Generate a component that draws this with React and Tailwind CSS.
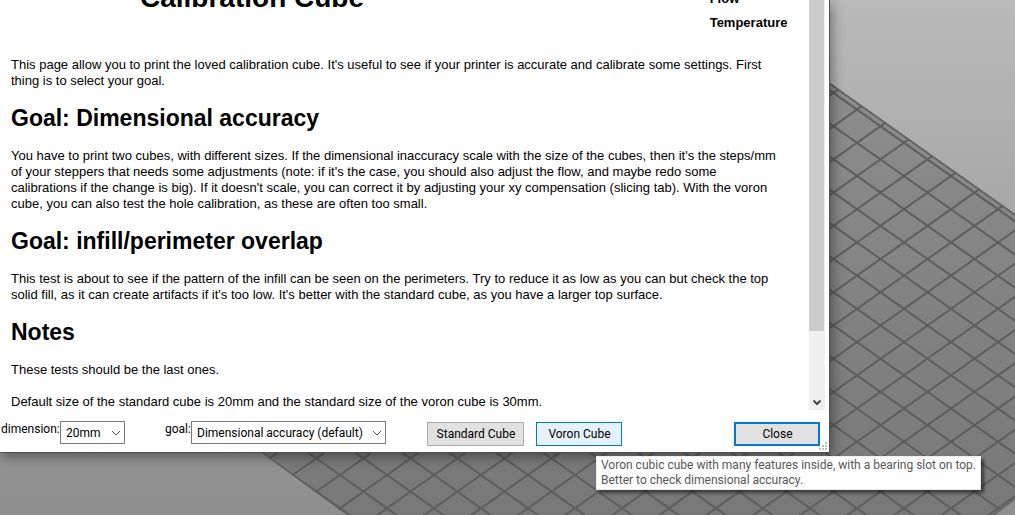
const STEPS = Array.from({ length: 72 }, (_, i) => i - 36);

function PrintBed() {
  return (
    <svg
      className="absolute inset-0 h-full w-full"
      viewBox="0 0 1015 515"
      preserveAspectRatio="xMinYMin slice"
      aria-hidden="true"
    >
      <defs>
        <linearGradient id="sky" x1="0" y1="0" x2="0" y2="1">
          <stop offset="0" stopColor="#bababa" />
          <stop offset="0.4" stopColor="#a8a8a8" />
          <stop offset="1" stopColor="#8e8e8e" />
        </linearGradient>
        <linearGradient id="bed" x1="0" y1="0" x2="0" y2="1">
          <stop offset="0" stopColor="#919191" />
          <stop offset="1" stopColor="#787878" />
        </linearGradient>
        <clipPath id="bedClip">
          <path d="M257 449L500 0L712 0L830 83L1015 214V498L992 515H346Z" />
        </clipPath>
        <clipPath id="gridClip">
          <path d="M250 444L500 0L700 -4L833 90L1015 218V498L992 515H346Z" />
        </clipPath>
      </defs>
      <rect width="1015" height="515" fill="url(#sky)" />
      <g clipPath="url(#bedClip)">
        <rect width="1015" height="515" fill="url(#bed)" />
      </g>
      <g clipPath="url(#bedClip)" stroke="#5e5e5e" strokeWidth="2">
        {STEPS.map((k) => (
          <path key={k} d={`M-14 ${691.9 + k * 33.22}L1020 ${-38.9 + k * 33.22}`} />
        ))}
      </g>
      <g clipPath="url(#gridClip)" stroke="#5e5e5e" strokeWidth="2">
        {STEPS.map((k) => (
          <path key={k} d={`M-13 ${225.5 + k * 33.22}L1021 ${956.3 + k * 33.22}`} />
        ))}
      </g>
      <path d="M826 81L1016 215.5M992 516L1016 498" stroke="#636363" strokeWidth="1.8" fill="none" />
    </svg>
  );
}

function Chevron() {
  return (
    <svg
      className="pointer-events-none absolute top-1/2 right-1 h-2 w-2.5 -translate-y-1/2"
      viewBox="0 0 10 8"
      fill="none"
      stroke="#555"
      aria-hidden="true"
    >
      <path d="M1 2L5 6L9 2" />
    </svg>
  );
}

function Combo({ id, label, options, labelWidth, width }) {
  return (
    <div className="flex items-start">
      <label htmlFor={id} className={`leading-4 whitespace-nowrap ${labelWidth}`}>{label}</label>
      <div className={`relative ${width}`}>
        <select
          id={id}
          className="block h-[23px] w-full appearance-none border border-[#7a7a7a] bg-white pr-4 pl-[5px] outline-none"
        >
          {options.map((o) => (
            <option key={o}>{o}</option>
          ))}
        </select>
        <Chevron />
      </div>
    </div>
  );
}

function Goal({ title, lines }) {
  return (
    <section>
      <h2 className="my-4 text-[23px] leading-[27px] font-bold">{title}</h2>
      <Lines lines={lines} />
    </section>
  );
}

function Lines({ lines }) {
  return (
    <p>
      {lines.map((line) => (
        <span key={line} className="block whitespace-nowrap">{line}</span>
      ))}
    </p>
  );
}

export default function App() {
  return (
    <main className="relative min-h-screen overflow-hidden bg-[#8e8e8e] font-['Liberation_Sans',sans-serif] text-black">
      <PrintBed />
      <div
        role="dialog"
        aria-label="Calibration Cube"
        className="relative w-9/11 border-r border-b border-[#505050] bg-white shadow-[2px_4px_12px_rgba(0,0,0,0.4)]"
      >
        <div className="flex pr-1">
          <article className="min-w-0 flex-1 pl-[11px] text-[13px] leading-4">
            <header className="flex h-[57px] items-start justify-between overflow-hidden pr-[22px] pl-[129px]">
              <h1 className="-mt-[18px] text-[28px] leading-8 font-bold">Calibration Cube</h1>
              <ul className="-mt-[9px] space-y-2 font-bold">
                <li>Flow</li>
                <li>Temperature</li>
              </ul>
            </header>
            <Lines
              lines={[
                "This page allow you to print the loved calibration cube. It's useful to see if your printer is accurate and calibrate some settings. First",
                'thing is to select your goal.',
              ]}
            />
            <Goal
              title="Goal: Dimensional accuracy"
              lines={[
                "You have to print two cubes, with different sizes. If the dimensional inaccuracy scale with the size of the cubes, then it's the steps/mm",
                "of your steppers that needs some adjustments (note: if it's the case, you should also adjust the flow, and maybe redo some",
                "calibrations if the change is big). If it doesn't scale, you can correct it by adjusting your xy compensation (slicing tab). With the voron",
                'cube, you can also test the hole calibration, as these are often too small.',
              ]}
            />
            <Goal
              title="Goal: infill/perimeter overlap"
              lines={[
                'This test is about to see if the pattern of the infill can be seen on the perimeters. Try to reduce it as low as you can but check the top',
                "solid fill, as it can create artifacts if it's too low. It's better with the standard cube, as you have a larger top surface.",
              ]}
            />
            <Goal title="Notes" lines={['These tests should be the last ones.']} />
            <p className="mt-4">
              Default size of the standard cube is 20mm and the standard size of the voron cube is 30mm.
            </p>
          </article>
          <div className="flex w-4 flex-col bg-[#f0f0f0]">
            <div className="h-[331px] w-[15px] bg-[#cdcdcd]" />
            <button type="button" aria-label="Scroll down" className="mt-auto flex h-4 w-full items-center justify-center">
              <svg className="h-2 w-2" viewBox="0 0 8 8" fill="none" stroke="#484848" strokeWidth="2" aria-hidden="true">
                <path d="M0.5 2.5L4 6L7.5 2.5" />
              </svg>
            </button>
          </div>
        </div>
        <footer className="relative flex h-[42px] items-start pt-[11px] pr-[9px] pl-px font-['Roboto',sans-serif] text-xs">
          <Combo
            id="dimension"
            label="dimension:"
            labelWidth="w-[59px]"
            width="w-[65px]"
            options={['20mm', '30mm', '40mm']}
          />
          <div className="w-10" />
          <Combo
            id="goal"
            label="goal:"
            labelWidth="w-[26px]"
            width="w-[195px]"
            options={['Dimensional accuracy (default)', 'infill/perimeter overlap']}
          />
          <div className="ml-auto flex pt-px">
            <button type="button" className="mr-3 h-6 w-[97px] border border-[#adadad] bg-[#e1e1e1]">
              Standard Cube
            </button>
            <button
              type="button"
              aria-describedby="voron-tip"
              className="mr-28 h-6 w-[86px] border border-[#0078d7] bg-[#e5f1fb]"
            >
              Voron Cube
            </button>
            <button type="button" className="h-6 w-[86px] border-2 border-[#0078d7] bg-[#e1e1e1]">
              Close
            </button>
          </div>
          <svg className="absolute right-0.5 bottom-0.5 h-2 w-2" viewBox="0 0 8 8" fill="#bfbfbf" aria-hidden="true">
            <path d="M6 0h2v2h-2zM6 3h2v2h-2zM6 6h2v2h-2zM3 3h2v2h-2zM3 6h2v2h-2zM0 6h2v2h-2z" />
          </svg>
          <div
            id="voron-tip"
            role="tooltip"
            className="absolute top-[46px] left-[596px] border border-[#ededed] bg-white px-1 py-px leading-[15px] whitespace-nowrap text-[#575757] shadow-[3px_3px_3px_rgba(0,0,0,0.5)]"
          >
            Voron cubic cube with many features inside, with a bearing slot on top.
            <br />
            Better to check dimensional accuracy.
          </div>
        </footer>
      </div>
    </main>
  );
}
